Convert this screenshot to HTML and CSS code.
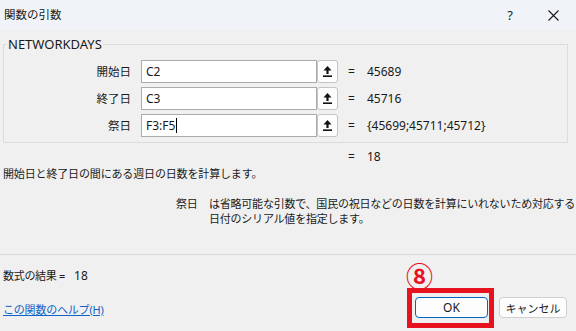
FILE: index.html
```html
<!DOCTYPE html>
<html lang="ja">
<head>
<meta charset="utf-8">
<title>関数の引数</title>
<link rel="stylesheet" href="styles.css">
</head>
<body>
<div class="window">
  <header class="titlebar">
    <span class="title">関数の引数</span>
    <div class="controls">
      <span class="help">?</span>
      <span class="close"><svg width="11" height="11" viewBox="0 0 11 11"><path d="M0.5 0.5 L10.5 10.5 M10.5 0.5 L0.5 10.5" stroke="#1a1a1a" stroke-width="1.1" fill="none"/></svg></span>
    </div>
  </header>

  <main class="content">
    <fieldset class="group">
      <legend>NETWORKDAYS</legend>
      <div class="args">
        <div class="arg">
          <label class="arg-label">開始日</label>
          <div class="arg-input">C2</div>
          <span class="ref"><svg width="9" height="11" viewBox="0 0 9 11"><path d="M4.5 0 L8.5 4.5 L5.6 4.5 L5.6 8 L3.4 8 L3.4 4.5 L0.5 4.5 Z" fill="#111"/><rect x="0" y="9.4" width="9" height="1.6" fill="#111"/></svg></span>
          <span class="eq">=</span>
          <span class="val">45689</span>
        </div>
        <div class="arg">
          <label class="arg-label">終了日</label>
          <div class="arg-input">C3</div>
          <span class="ref"><svg width="9" height="11" viewBox="0 0 9 11"><path d="M4.5 0 L8.5 4.5 L5.6 4.5 L5.6 8 L3.4 8 L3.4 4.5 L0.5 4.5 Z" fill="#111"/><rect x="0" y="9.4" width="9" height="1.6" fill="#111"/></svg></span>
          <span class="eq">=</span>
          <span class="val">45716</span>
        </div>
        <div class="arg">
          <label class="arg-label">祭日</label>
          <div class="arg-input">F3:F5<span class="caret"></span></div>
          <span class="ref"><svg width="9" height="11" viewBox="0 0 9 11"><path d="M4.5 0 L8.5 4.5 L5.6 4.5 L5.6 8 L3.4 8 L3.4 4.5 L0.5 4.5 Z" fill="#111"/><rect x="0" y="9.4" width="9" height="1.6" fill="#111"/></svg></span>
          <span class="eq">=</span>
          <span class="val">{45699;45711;45712}</span>
        </div>
      </div>
    </fieldset>

    <div class="total"><span class="eq">=</span><span class="val">18</span></div>
    <p class="desc">開始日と終了日の間にある週日の日数を計算します。</p>
    <div class="argdesc">
      <span class="argname">祭日</span>
      <p class="argtext">は省略可能な引数で、国民の祝日などの日数を計算にいれないため対応する<br>日付のシリアル値を指定します。</p>
    </div>
  </main>

  <footer class="footer">
    <div class="footer-left">
      <div class="result">数式の結果 =<span class="result-val">18</span></div>
      <a class="help-link" href="#">この関数のヘルプ(H)</a>
    </div>
    <div class="buttons">
      <div class="ok-wrap">
        <span class="annot-num">⑧</span>
        <span class="annot-box"></span>
        <button class="btn btn-ok">OK</button>
      </div>
      <button class="btn btn-cancel">キャンセル</button>
    </div>
  </footer>
</div>
</body>
</html>
```

FILE: styles.css
```css
html, body {
  margin: 0;
  padding: 0;
  background: #f0f0f0;
}

body {
  width: 576px;
  height: 331px;
  overflow: hidden;
  font-family: "Noto Sans", "Noto Sans CJK JP", sans-serif;
  color: #1a1a1a;
}

.window {
  display: flex;
  flex-direction: column;
  height: 331px;
}

/* title bar */
.titlebar {
  height: 30px;
  display: flex;
  align-items: center;
  background: #f0f4f9;
  padding-left: 4px;
}

.title {
  font-size: 11.5px;
  line-height: 16px;
  color: #1a1a1a;
}

.controls {
  margin-left: auto;
  display: flex;
  align-items: center;
  height: 30px;
}

.help {
  width: 40px;
  text-align: center;
  font-size: 13px;
  line-height: 16px;
}

.close {
  width: 46px;
  display: flex;
  justify-content: center;
  align-items: center;
}

/* group box */
.content {
  display: flex;
  flex-direction: column;
}

.group {
  margin: 6px 8px 0 3px;
  padding: 8px 0 5px 0;
  border: 1px solid #dcdcdc;
  min-width: 0;
}

.group legend {
  font-size: 13px;
  line-height: 16px;
  padding: 0 1px;
  margin-left: 3px;
  color: #1a1a1a;
}

.args {
  display: flex;
  flex-direction: column;
  gap: 4px;
}

.arg {
  display: flex;
  align-items: center;
  height: 23px;
}

.arg-label {
  width: 127px;
  margin-right: 10px;
  text-align: right;
  font-size: 11.5px;
  line-height: 16px;
}

.arg-input {
  box-sizing: border-box;
  width: 176px;
  height: 23px;
  background: #fff;
  border: 1px solid #ababab;
  padding-left: 4px;
  font-size: 12px;
  line-height: 21px;
  display: flex;
  align-items: center;
}

.caret {
  display: inline-block;
  width: 1px;
  height: 15px;
  background: #000;
  margin-left: 1px;
}

.ref {
  box-sizing: border-box;
  width: 21px;
  height: 23px;
  background: #fdfdfd;
  border: 1px solid #c4c4c4;
  border-radius: 3px;
  display: flex;
  align-items: center;
  justify-content: center;
}

.eq {
  font-size: 12px;
  line-height: 16px;
  margin-left: 10px;
  width: 7px;
}

.val {
  font-size: 12px;
  line-height: 16px;
  margin-left: 12px;
}

.total {
  display: flex;
  margin-top: 6px;
  padding-left: 338px;
  height: 16px;
}

.desc {
  margin: 1px 0 0 3px;
  font-size: 11px;
  line-height: 16px;
  letter-spacing: -0.15px;
}

.argdesc {
  display: flex;
  margin-top: 14px;
  padding-left: 176px;
  font-size: 11px;
  line-height: 15px;
}

.argname {
  width: 33px;
  flex: none;
  letter-spacing: -0.3px;
}

.argtext {
  margin: 0;
  white-space: nowrap;
  letter-spacing: -0.22px;
}

/* footer */
.footer {
  margin-top: 28px;
  border-top: 1px solid #d9d9d9;
  display: flex;
  justify-content: space-between;
  align-items: flex-end;
  padding: 0 9px 0 3px;
}

.footer-left {
  display: flex;
  flex-direction: column;
  padding-top: 13px;
}

.result {
  font-size: 11px;
  line-height: 16px;
  letter-spacing: -0.3px;
}

.result-val {
  margin-left: 9px;
  font-size: 12px;
  letter-spacing: 0;
}

.help-link {
  margin-top: 18px;
  font-size: 11px;
  line-height: 16px;
  color: #0b63c9;
  text-decoration: underline;
  letter-spacing: -0.2px;
}

.buttons {
  display: flex;
  gap: 11px;
}

.btn {
  box-sizing: border-box;
  height: 21px;
  padding: 0;
  background: #fdfdfd;
  border: 1px solid #cfcfcf;
  border-radius: 4px;
  font-family: "Noto Sans", "Noto Sans CJK JP", sans-serif;
  color: #1a1a1a;
}

.btn-ok {
  width: 73px;
  border-color: #0067c0;
  font-size: 12px;
}

.btn-cancel {
  width: 68px;
  font-size: 11px;
}

.ok-wrap {
  position: relative;
  display: flex;
}

.annot-box {
  position: absolute;
  left: -8px;
  right: -6px;
  top: -9px;
  bottom: -10px;
  border: 5px solid #e8111f;
}

.annot-num {
  position: absolute;
  left: -9px;
  top: -36px;
  font-size: 27px;
  line-height: 30px;
  font-weight: 700;
  color: #e8111f;
  font-family: "Noto Sans CJK JP", sans-serif;
}
```
